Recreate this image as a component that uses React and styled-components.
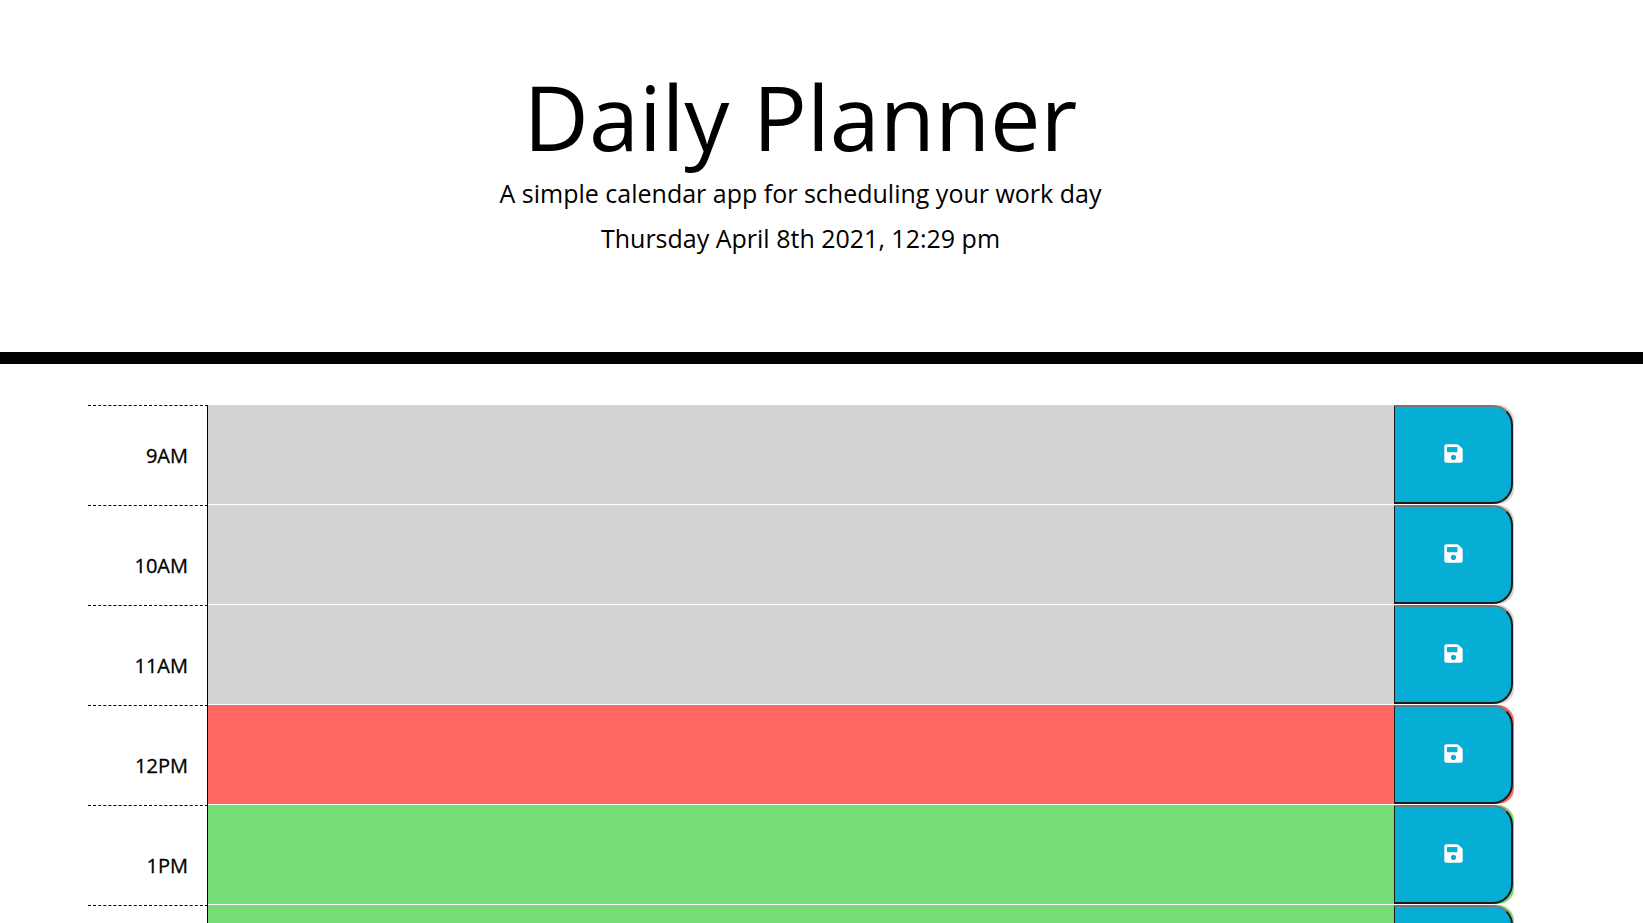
import React from "react";
import styled, { createGlobalStyle } from "styled-components";
import { FaSave } from "react-icons/fa";

const GlobalStyle = createGlobalStyle`
  html, body {
    margin: 0;
    height: 100%;
    overflow: hidden;
    background: #fff;
    color: #000;
    font-family: "Open Sans", sans-serif;
  }
  * {
    box-sizing: border-box;
  }
`;

const Header = styled.header`
  height: 364px;
  padding: 61px 42px 0 0;
  text-align: center;
  border-bottom: 12px solid #000;

  h1 {
    margin: 0;
    font-size: 90px;
    font-weight: 400;
    line-height: 110px;
  }

  p {
    margin: 0;
    font-size: 25px;
    line-height: 45px;
  }
`;

const Planner = styled.main`
  width: 1426px;
  margin: 41px 0 0 88px;
`;

const Row = styled.div`
  display: flex;
  height: 100px;
`;

const Hour = styled.div`
  flex: 0 0 120px;
  padding: ${(p) => (p.$first ? "0" : "20px")} 19px 0 0;
  display: flex;
  align-items: center;
  justify-content: flex-end;
  border-top: 1px dashed #000;
  border-right: 1px solid #000;
  font-size: 20px;
  -webkit-text-stroke: 0.3px #000;
`;

const colors = {
  past: "#d3d3d3",
  present: "#ff6961",
  future: "#77dd77",
};

const Description = styled.div`
  flex: 1;
  background: ${(p) => colors[p.$status]};
  border-bottom: 1px solid #fff;
`;

const SaveButton = styled.button`
  flex: 0 0 120px;
  padding: 0 1px 0 0;
  display: flex;
  align-items: center;
  justify-content: center;
  background: ${(p) => colors[p.$status]};
  border: none;
  border-bottom: 1px solid #fff;
  border-radius: 0 16px 16px 0;
  color: #fff;
  font-size: 21px;
  position: relative;
  overflow: hidden;

  &::before {
    content: "";
    position: absolute;
    inset: 0 1px 0 0;
    background: #06aed5;
    border: 2px solid #1c1c1c;
    border-top-color: #767676;
    border-left-width: 1px;
    border-radius: 0 20px 20px 0;
  }

  svg {
    position: relative;
    margin-top: -2px;
  }
`;

const hours = [
  ["9AM", "past"],
  ["10AM", "past"],
  ["11AM", "past"],
  ["12PM", "present"],
  ["1PM", "future"],
  ["2PM", "future"],
];

export default function App() {
  return (
    <>
      <GlobalStyle />
      <Header>
        <h1>Daily Planner</h1>
        <p>A simple calendar app for scheduling your work day</p>
        <p>Thursday April 8th 2021, 12:29 pm</p>
      </Header>
      <Planner>
        {hours.map(([hour, status], i) => (
          <Row key={hour}>
            <Hour $first={i === 0}>{hour}</Hour>
            <Description $status={status} />
            <SaveButton $status={status} aria-label="Save">
              <FaSave />
            </SaveButton>
          </Row>
        ))}
      </Planner>
    </>
  );
}
